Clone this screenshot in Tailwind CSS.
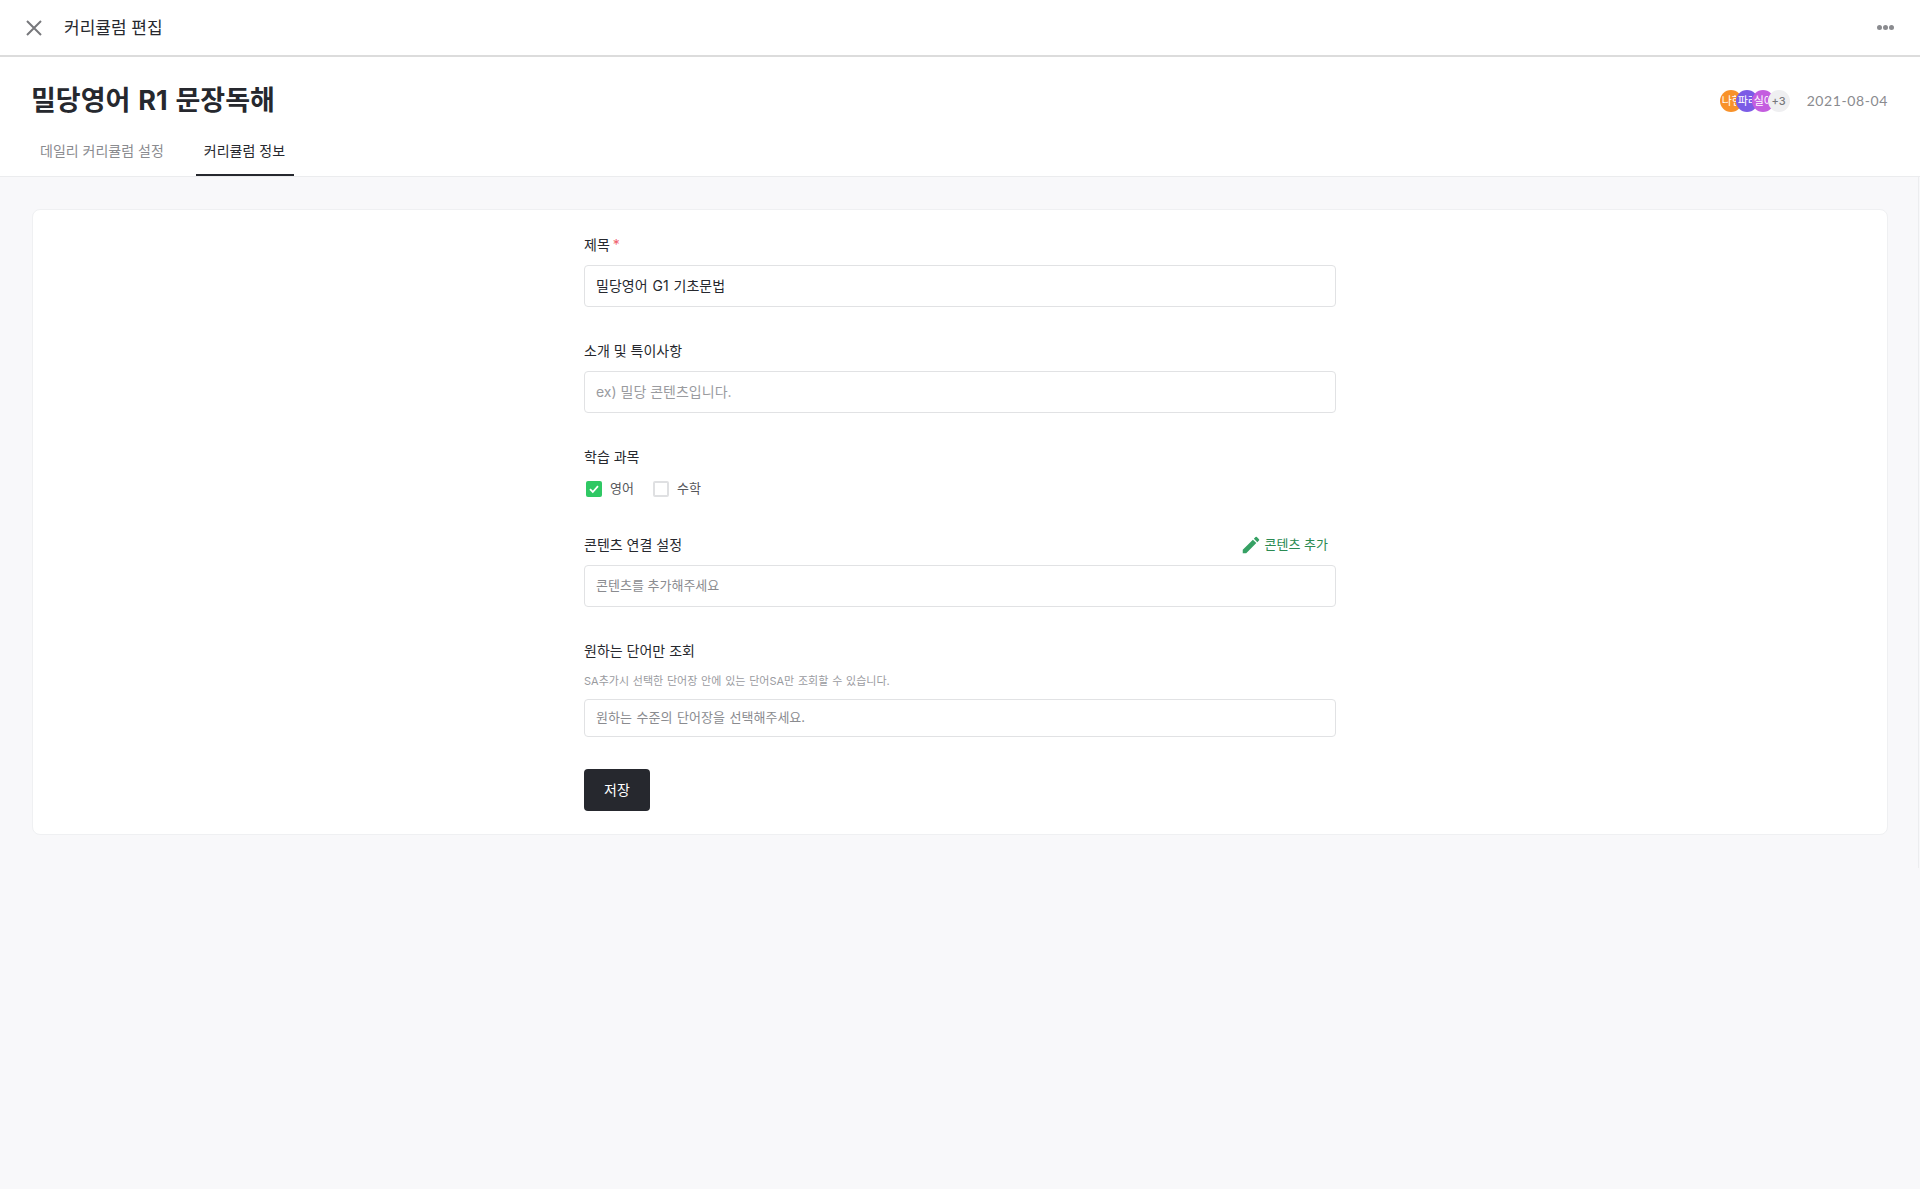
<!DOCTYPE html>
<html lang="ko">

<head>
    <meta charset="UTF-8">
    <meta name="viewport" content="width=device-width, initial-scale=1.0">
    <script src="https://cdn.jsdelivr.net/npm/@tailwindcss/browser@4"></script>
    <title>커리큘럼 편집</title>
</head>

<body class="relative min-h-screen bg-[#f8f8fa] font-['Inter','Noto_Sans_CJK_KR',sans-serif] text-[#26282e]">
    <header class="flex h-[57px] items-center justify-between border-b-2 border-[#dcdcdc] bg-white pl-[24px] pr-[26px]">
        <div class="flex items-center gap-[20px]">
            <svg class="h-[20px] w-[20px]" viewBox="0 0 20 20" fill="none" stroke="#77787c" stroke-width="2">
                <path d="M3 3l14 14M17 3L3 17" />
            </svg>
            <span class="text-[17px] leading-[24px]">커리큘럼 편집</span>
        </div>
        <div class="flex gap-[1px]">
            <span class="h-[5px] w-[5px] rounded-full bg-[#8a8b8f]"></span>
            <span class="h-[5px] w-[5px] rounded-full bg-[#8a8b8f]"></span>
            <span class="h-[5px] w-[5px] rounded-full bg-[#8a8b8f]"></span>
        </div>
    </header>

    <section class="border-b border-[#ebecee] bg-white">
        <div class="flex h-[74px] items-center justify-between pl-[31px] pr-[32px] pt-[14px]">
            <h1 class="text-[27px] font-bold leading-[40px] [word-spacing:1.5px]">밀당영어 R1 문장독해</h1>
            <div class="flex items-center">
                <div class="flex text-[11px] leading-[22px]">
                    <span class="h-[22px] w-[22px] rounded-full bg-[#f8922a] pl-[2px] text-white"><span class="block w-[14px] overflow-hidden whitespace-nowrap">나현</span></span>
                    <span class="-ml-[6px] h-[22px] w-[22px] rounded-full bg-[#7b5ce6] pl-[2px] text-white"><span class="block w-[14px] overflow-hidden whitespace-nowrap">파리</span></span>
                    <span class="-ml-[6px] h-[22px] w-[22px] rounded-full bg-[#c45ddf] pl-[2px] text-white"><span class="block w-[14px] overflow-hidden whitespace-nowrap">실어</span></span>
                    <span class="-ml-[6px] h-[22px] w-[22px] rounded-full bg-[#efeff1] text-center font-medium text-[#77787c]">+3</span>
                </div>
                <span class="ml-[17px] pb-[2px] font-['Lato',sans-serif] text-[14px] tracking-[0.6px] text-[#8a8b8f]">2021-08-04</span>
            </div>
        </div>
        <nav class="flex h-[45px] gap-[24px] pl-[32px] text-[14px]">
            <a class="px-[8px] pt-[9px] text-[#8a8b8f]">데일리 커리큘럼 설정</a>
            <a class="w-[98px] border-b-2 border-[#26282e] px-[8px] pt-[9px]">커리큘럼 정보</a>
        </nav>
    </section>

    <main class="px-[32px] pt-[32px]">
        <div class="h-[626px] rounded-[8px] border border-[#eff0f2] bg-white pt-[24px]">
            <form class="mx-auto w-[752px] text-[14px]">
                <label class="block leading-[22px]">제목<span class="ml-[3px] text-[#f0616d]">*</span></label>
                <div class="mt-[9px] flex h-[42px] items-center rounded-[4px] border border-[#e1e2e4] px-[11px] pb-[2px] [word-spacing:1px]">밀당영어 G1 기초문법</div>

                <label class="mt-[33px] block leading-[22px]">소개 및 특이사항</label>
                <div class="mt-[9px] flex h-[42px] items-center rounded-[4px] border border-[#e1e2e4] px-[11px] pb-[2px] text-[#9a9b9f]">ex) 밀당 콘텐츠입니다.</div>

                <label class="mt-[33px] block leading-[22px]">학습 과목</label>
                <div class="mt-[9px] flex h-[24px] items-center pl-[2px] text-[13px] text-[#55565a]">
                    <span class="flex h-[16px] w-[16px] items-center justify-center rounded-[2px] bg-[#2fc864]">
                        <svg class="h-[12px] w-[12px]" viewBox="0 0 12 12" fill="none" stroke="#fff" stroke-width="1.8">
                            <path d="M2 6.2l2.8 2.8L10 3.2" />
                        </svg>
                    </span>
                    <span class="ml-[8px]">영어</span>
                    <span class="ml-[19px] h-[16px] w-[16px] rounded-[2px] border-2 border-[#dfe0e2]"></span>
                    <span class="ml-[8px]">수학</span>
                </div>

                <div class="mt-[33px] flex items-center justify-between pr-[8px]">
                    <label class="leading-[22px]">콘텐츠 연결 설정</label>
                    <span class="flex items-center gap-[3px] text-[13px] text-[#2b8a52]">
                        <svg class="h-[22px] w-[22px]" viewBox="0 0 24 24" fill="#36a164">
                            <path d="M3 17.25V21h3.75L17.81 9.94l-3.75-3.75L3 17.25zM20.71 7.04a1 1 0 0 0 0-1.41l-2.34-2.34a1 1 0 0 0-1.41 0l-1.83 1.83 3.75 3.75 1.83-1.83z" />
                        </svg>
                        콘텐츠 추가
                    </span>
                </div>
                <div class="mt-[9px] flex h-[42px] items-center rounded-[4px] border border-[#e1e2e4] px-[11px] text-[13px] text-[#8a8b8f]">콘텐츠를 추가해주세요</div>

                <label class="mt-[33px] block leading-[22px]">원하는 단어만 조회</label>
                <p class="mt-[11px] text-[11px] leading-[16px] text-[#9a9b9f] [word-spacing:0.7px]">SA추가시 선택한 단어장 안에 있는 단어SA만 조회할 수 있습니다.</p>
                <div class="mt-[10px] flex h-[38px] items-center rounded-[4px] border border-[#e1e2e4] px-[11px] text-[13px] text-[#8a8b8f] [word-spacing:1px]">원하는 수준의 단어장을 선택해주세요.</div>

                <button type="button" class="mt-[32px] h-[42px] w-[66px] rounded-[4px] bg-[#26282e] pb-[2px] text-white">저장</button>
            </form>
        </div>
    </main>

    <div class="absolute right-[1px] top-[177px] h-[691px] w-px bg-[#ecedef]"></div>
</body>

</html>
